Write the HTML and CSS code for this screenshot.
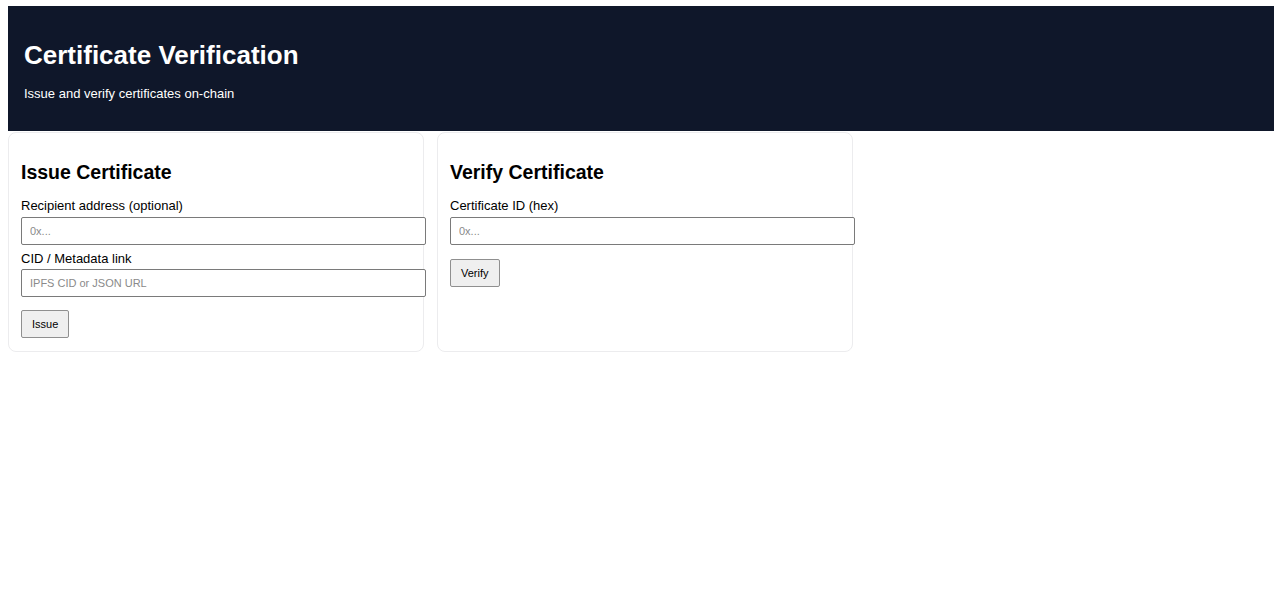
FILE: index.html
```html
<!DOCTYPE html>
<html lang="en">
<head>
<meta charset="utf-8">
<title>Certificate Verification</title>
<link rel="stylesheet" href="styles.css">
</head>
<body>
<header class="hero">
  <h1 class="hero-title">Certificate Verification</h1>
  <p class="hero-sub">Issue and verify certificates on-chain</p>
</header>
<main class="cards">
  <section class="card">
    <h2 class="card-title">Issue Certificate</h2>
    <label class="field-label" for="recipient">Recipient address (optional)</label>
    <input class="field-input" id="recipient" type="text" placeholder="0x...">
    <label class="field-label field-label-second" for="cid">CID / Metadata link</label>
    <input class="field-input field-input-second" id="cid" type="text" placeholder="IPFS CID or JSON URL">
    <div class="actions"><button class="btn" type="button">Issue</button></div>
  </section>
  <section class="card">
    <h2 class="card-title">Verify Certificate</h2>
    <label class="field-label" for="certid">Certificate ID (hex)</label>
    <input class="field-input" id="certid" type="text" placeholder="0x...">
    <div class="actions actions-wide"><button class="btn" type="button">Verify</button></div>
  </section>
</main>
</body>
</html>
```
FILE: styles.css
```css
* { box-sizing: content-box; }
html, body { background: #ffffff; }
body {
  margin: 6px 6px 0 8px;
  font-family: "Liberation Sans", Arial, sans-serif;
  color: #000;
}
.hero {
  background: #0f172a;
  color: #ffffff;
  height: 125px;
  padding: 0 16px;
  display: flex;
  flex-direction: column;
}
.hero-title {
  margin: 34px 0 0;
  font-size: 26px;
  line-height: 30px;
  font-weight: 700;
}
.hero-sub {
  margin: 16px 0 0;
  font-size: 13px;
  line-height: 16px;
}
.cards {
  display: flex;
  gap: 13px;
  margin-top: 1px;
  align-items: stretch;
}
.card {
  width: 390px;
  padding: 0 12px 13px;
  border: 1px solid #ececee;
  border-radius: 8px;
  display: flex;
  flex-direction: column;
}
.card-title {
  margin: 27px 0 0;
  font-size: 19.5px;
  line-height: 24px;
  font-weight: 700;
}
.field-label {
  display: block;
  margin-top: 14px;
  font-size: 13px;
  line-height: 16px;
}
.field-label-second { margin-top: 6px; }
.field-input {
  display: block;
  flex: 0 0 auto;
  margin-top: 3px;
  width: 387px;
  height: 26px;
  padding: 0 8px;
  border: 1px solid #7a7a7a;
  border-radius: 2px;
  font-family: "Liberation Sans", Arial, sans-serif;
  font-size: 11px;
  color: #000;
  background: #fff;
}
.field-input-second { margin-top: 2px; }
.field-input::placeholder { color: #8a8a8a; }
.actions { margin-top: 13px; flex: 0 0 auto; display: flex; }
.actions-wide { margin-top: 14px; }
.btn {
  height: 26px;
  padding: 0 10px;
  border: 1px solid #8f8f8f;
  border-radius: 2px;
  background: #efefef;
  font-family: "Liberation Sans", Arial, sans-serif;
  font-size: 11px;
  color: #000;
}
```
